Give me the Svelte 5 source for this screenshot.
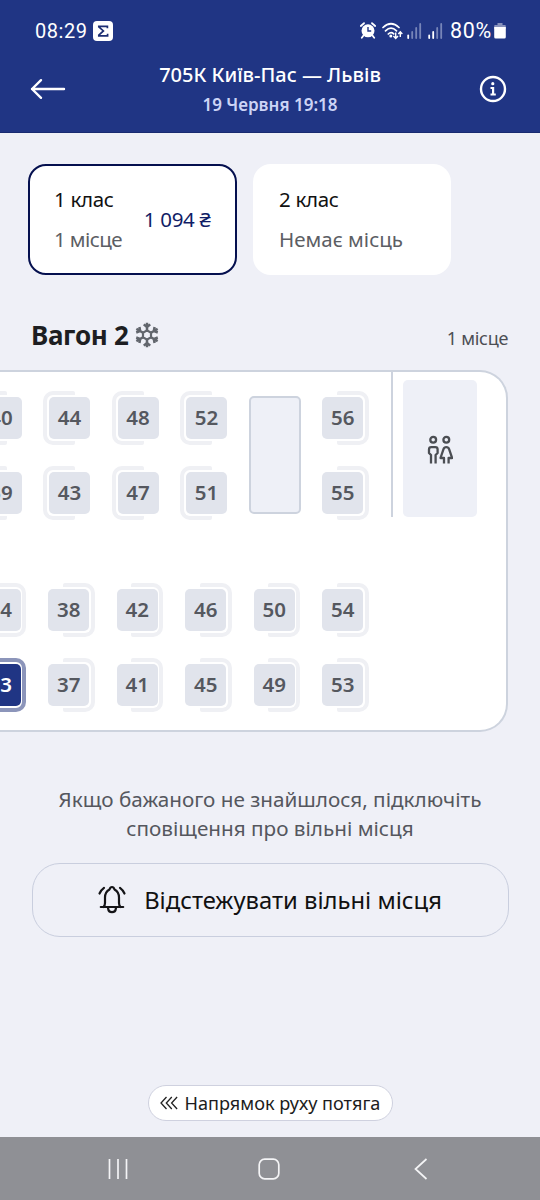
<script>
  const topRows = [
    ['40', '44', '48', '52', '', '56'],
    ['39', '43', '47', '51', '', '55']
  ];
  const bottomRows = [
    ['34', '38', '42', '46', '50', '54'],
    ['33', '37', '41', '45', '49', '53']
  ];
  const chosen = '33';
  const spokes = [0, 60, 120, 180, 240, 300];
</script>

<div class="screen">
  <header>
    <div class="status">
      <div class="clock">
        <span class="time">08:29</span>
        <svg width="20" height="20" viewBox="0 0 20 20"><rect width="20" height="20" rx="4" fill="#fff" /><path d="M14.400 7.200V5.300H5.800v.6l4.600 4-4.600 4.200v.700h8.800v-2.100" fill="none" stroke="#1d2f74" stroke-width="1.700" /></svg>
      </div>
      <div class="indicators">
        <svg class="alarm" width="16" height="17" viewBox="0 0 16 17"><circle cx="8" cy="8.800" r="6.500" fill="#fff" /><path d="M.8 4 4 1.200M15.200 4 12 1.200M3.500 13.500l-1.700 2.200M12.500 13.500l1.700 2.200" stroke="#fff" stroke-width="1.800" stroke-linecap="round" /><path d="M8 5v4h3.200" fill="none" stroke="#203584" stroke-width="1.400" /></svg>
        <svg class="wifi" width="21" height="18" viewBox="0 0 21 18"><g fill="none" stroke="#fff" stroke-width="1.700" stroke-linecap="round"><path d="M1 5.500Q9-2 17 5.500M3.500 8.800q5.500-5.300 11 0M6.300 12q2.700-2.700 5.400-.2" /></g><circle cx="8.800" cy="14" r="1.500" fill="#fff" /><g fill="none" stroke="#fff" stroke-width="1.400"><path d="M13.700 10.500v5.800m-2.300-2.200 2.300 2.400 2.300-2.400M18.300 15v-5m-2 2 2-2.200 2 2.200" /></g></svg>
        <svg class="sig" width="15" height="16" viewBox="0 0 15 16"><g stroke-width="1.800" stroke-linecap="round"><path d="M1.200 12.500V15" stroke="#fff" /><path d="M5.200 9v6M9.200 5v10M13.200 1v14" stroke="#7785b8" /></g></svg>
        <svg class="sig two" width="15" height="16" viewBox="0 0 15 16"><g stroke-width="1.800" stroke-linecap="round"><path d="M1.200 12.500V15M5.200 9v6" stroke="#fff" /><path d="M9.200 5v10M13.200 1v14" stroke="#7785b8" /></g></svg>
        <span class="charge">80%</span>
        <svg width="12" height="17" viewBox="0 0 12 17"><path d="M3.500 1h5v2H11q.8 0 .8 1v3H.2V4q0-1 .8-1h2.500z" fill="#8791bb" /><path d="M.2 5h11.600v10q0 1.500-1.500 1.500H1.700Q.2 16.500.2 15z" fill="#fff" /></svg>
      </div>
    </div>
    <div class="bar">
      <svg class="back" width="36" height="22" viewBox="0 0 36 22"><path d="M11 2.200 2 11l9 8.800M2 11h32" fill="none" stroke="#fff" stroke-width="2.400" stroke-linecap="round" stroke-linejoin="round" /></svg>
      <div class="trip">
        <h1>705К Київ-Пас — Львів</h1>
        <p>19 Червня 19:18</p>
      </div>
      <svg class="info" width="28" height="28" viewBox="0 0 28 28"><circle cx="14" cy="14" r="12" fill="none" stroke="#fff" stroke-width="2.400" /><circle cx="13.800" cy="8.700" r="1.600" fill="#fff" /><path d="M11.500 13h2.600v6.200M11.500 19.500h5.300" fill="none" stroke="#fff" stroke-width="2.200" /></svg>
    </div>
  </header>

  <main>
    <section class="classes">
      <article class="card on">
        <div class="lines"><b>1 клас</b><span class="free">1 місце</span></div>
        <span class="price">1 094 ₴</span>
      </article>
      <article class="card">
        <div class="lines"><b>2 клас</b><span class="none">Немає місць</span></div>
      </article>
    </section>

    <div class="heading">
      <h2>Вагон 2</h2>
      <svg class="snow" width="24" height="26" viewBox="-12 -13 24 26">
        <g fill="none" stroke="#62666d" stroke-width="2.500">
          {#each spokes as a}
            <path transform="rotate({a})" d="M0-4V-12.300M-3.200-10.600 0-7.900l3.200-2.700" />
          {/each}
        </g>
        <path d="M0-4.600 4-2.300v4.600L0 4.600-4 2.300v-4.600z" fill="none" stroke="#62666d" stroke-width="2.200" />
      </svg>
      <span class="left">1 місце</span>
    </div>

    <section class="car">
      <div class="upper">
        <div class="seats">
          {#each topRows as row, r}
            {#each row as n, i}
              {#if n}
                <div class="cell" class:lead={i < 4}><div class="seat" class:back-left={i < 4}>{n}</div></div>
              {:else if r === 0}
                <div class="table"></div>
              {/if}
            {/each}
          {/each}
        </div>
        <div class="wall"></div>
        <div class="wc">
          <svg width="26" height="30" viewBox="0 0 26 30"><g fill="none" stroke="#4b4e53" stroke-width="2.300" stroke-linejoin="round"><circle cx="6.200" cy="4.800" r="2.900" /><circle cx="19.300" cy="4.800" r="2.900" /><path d="M4 28.500v-8.500L2 18v-3.500q0-2.300 2.300-2.300h4q2.300 0 2.300 2.300V18l-2 2v8.500M17 28.500V23h-3.500l3-8.800q.7-2 2.800-2t2.800 2l3 8.800h-3.500v5.500" /></g></svg>
        </div>
      </div>
      <div class="seats lower">
        {#each bottomRows as row}
          {#each row as n}
            <div class="cell"><div class="seat" class:chosen={n === chosen}>{n}</div></div>
          {/each}
        {/each}
      </div>
    </section>

    <p class="hint">Якщо бажаного не знайшлося, підключіть<br />сповіщення про вільні місця</p>

    <button class="track">
      <svg width="28" height="30" viewBox="0 0 28 30"><g fill="none" stroke="#141417" stroke-width="2.200" stroke-linecap="round" stroke-linejoin="round"><path d="M2.800 22h22.400M5.500 22q1.500-1.500 1.500-4v-5.500q0-5.500 4.500-8Q12.300 2 14 2t2.500 2.500q4.500 2.500 4.500 8V18q0 2.500 1.500 4M10 23q.5 4.200 4 4.200t4-4.200M1.500 8.500Q3 5 6 2.800M26.500 8.500Q25 5 22 2.800" /></g></svg>
      <span>Відстежувати вільні місця</span>
    </button>

    <div class="direction">
      <svg width="18" height="14" viewBox="0 0 18 14"><path d="M6.500 1 1 7l5.500 6M11.800 1 6.300 7l5.500 6M17.100 1l-5.500 6 5.500 6" fill="none" stroke="#222" stroke-width="1.300" /></svg>
      <span>Напрямок руху потяга</span>
    </div>
  </main>

  <nav>
    <svg width="20" height="22" viewBox="0 0 20 22"><path d="M1.500 1v20M10 1v20M18.500 1v20" stroke="#f4f4f6" stroke-width="1.700" /></svg>
    <svg class="home" width="22" height="22" viewBox="0 0 22 22"><rect x="1.200" y="1.200" width="19.600" height="19.600" rx="5.500" fill="none" stroke="#f4f4f6" stroke-width="1.700" /></svg>
    <svg width="14" height="22" viewBox="0 0 14 22"><path d="M12.500 1 1.500 11l11 10" fill="none" stroke="#f4f4f6" stroke-width="1.700" /></svg>
  </nav>
</div>

<style>
  :global(body) { margin: 0; }
  * { box-sizing: border-box; }
  svg { display: block; flex: none; }
  h1, h2, p { margin: 0; }
  .screen {
    width: 540px; height: 1200px; overflow: hidden;
    display: flex; flex-direction: column;
    background: #eff0f7; color: #141417;
    font-family: "Noto Sans", sans-serif; white-space: nowrap;
  }
  header { height: 133px; flex: none; background: #203584; color: #fff; border-bottom: 1px solid #182a70; }
  .status { height: 60px; padding: 1px 34px 0 35px; display: flex; justify-content: space-between; align-items: center; font-family: Roboto, sans-serif; font-size: 20px; }
  .clock, .indicators { display: flex; align-items: center; }
  .clock { gap: 5px; }
  .time { letter-spacing: .55px; }
  .wifi { margin-left: 6px; }
  .sig { margin-left: 4px; }
  .sig.two { margin-left: 6px; }
  .charge { margin: 0 2px 0 7px; font-size: 21.500px; letter-spacing: .7px; }
  .bar { margin-top: -2px; display: grid; grid-template-columns: 36px 1fr 28px; align-items: center; padding: 0 33px 0 30px; }
  .trip { text-align: center; padding: 2px 5px 0 0; }
  h1 { font-size: 20px; line-height: 30px; font-weight: 500; }
  .trip p { font-size: 17px; line-height: 29px; font-weight: 600; color: #ccd4f6; }
  main { flex: 1; display: flex; flex-direction: column; align-items: flex-start; }
  .classes { display: flex; gap: 16px; margin: 31px 0 0 27.500px; }
  .card { width: 197.500px; height: 111px; border-radius: 18px; background: #fff; padding: 0 25px 2px 26px; display: flex; align-items: center; justify-content: space-between; }
  .card.on { width: 209.500px; border: 2px solid #05104f; padding: 0 24.500px 2px 24.500px; }
  .lines { display: flex; flex-direction: column; font-size: 20.500px; line-height: 40px; letter-spacing: -.3px; }
  .lines b { font-weight: 400; color: #111; }
  .lines span { color: #5c5e64; }
  .lines .free { letter-spacing: -.6px; }
  .lines .none { letter-spacing: 0; }
  .price { font-size: 20.500px; letter-spacing: -.3px; color: #101d66; }
  .heading { width: 477px; height: 40px; margin: 40px 0 1px 31px; display: flex; align-items: center; }
  h2 { font-size: 26px; font-weight: 700; letter-spacing: -.3px; color: #1d1e22; }
  .snow { margin-left: 6px; }
  .left { margin-left: auto; padding-top: 6px; font-size: 18px; letter-spacing: -.3px; color: #4c4e54; }
  .car { width: 508px; height: 362px; margin-top: 14px; border: 2px solid #cdd3de; border-left: 0; border-radius: 0 28px 28px 0; background: #fff; overflow: hidden; }
  .upper { display: flex; height: 211px; }
  .seats { display: grid; grid-template-columns: repeat(6, 68.500px); grid-template-rows: repeat(2, 75px); margin: 14px 0 0 -34px; align-content: start; flex: none; }
  .cell { display: flex; justify-content: center; padding: 11px 0 0; }
  .lead { padding-left: 1.500px; }
  .seat { position: relative; width: 41px; height: 42px; border-radius: 5px; background: #e1e4ec; color: #55585f; font-size: 20.500px; line-height: 41px; font-weight: 600; text-align: center; }
  .seat::before { content: ""; position: absolute; top: -6px; bottom: -6px; right: -5.500px; width: 28px; border: 4px solid #eff0f4; border-left: 0; border-radius: 2px 10px 10px 2px; }
  .seat.back-left::before { right: auto; left: -6px; border: 4px solid #eff0f4; border-right: 0; border-radius: 10px 2px 2px 10px; }
  .seat.chosen { background: #203584; color: #fff; }
  .seat.chosen::before { width: 53px; border: 4px solid #8c95ba; border-radius: 10px; }
  .table { grid-row: 1 / 3; grid-column: 5; width: 52px; height: 118px; margin: 10px 0 0 9px; border: 2px solid #cdd3de; border-radius: 5px; background: #eef0f7; }
  .wall { width: 2px; height: 145px; margin-left: 14px; background: #cdd3de; }
  .wc { width: 74px; height: 137px; margin: 8px 0 0 10px; border-radius: 5px; background: #eef0f7; display: flex; align-items: center; justify-content: center; }
  .wc svg { margin: 2px 0 0 0; }
  .lower { margin-top: -5px; }
  .hint { align-self: center; margin-top: 53px; font-size: 20.700px; line-height: 29px; color: #55575e; text-align: center; }
  .track { align-self: center; width: 477px; height: 74px; margin-top: 20px; padding: 0; border: 1px solid #c9cede; border-radius: 28px; background: transparent; display: flex; align-items: center; justify-content: center; gap: 18px; color: #111; font: 23.800px "Noto Sans", sans-serif; }
  .direction { align-self: center; width: 245px; height: 36px; margin-top: 148px; border: 1px solid #cfd1df; border-radius: 18px; background: #fff; display: flex; align-items: center; justify-content: center; gap: 7px; font-size: 18.100px; color: #1c1c20; }
  nav { height: 63px; flex: none; background: #8f9095; display: flex; align-items: center; justify-content: space-between; padding: 0 112px 0 108px; }
  .home { margin-right: 5px; }
</style>
